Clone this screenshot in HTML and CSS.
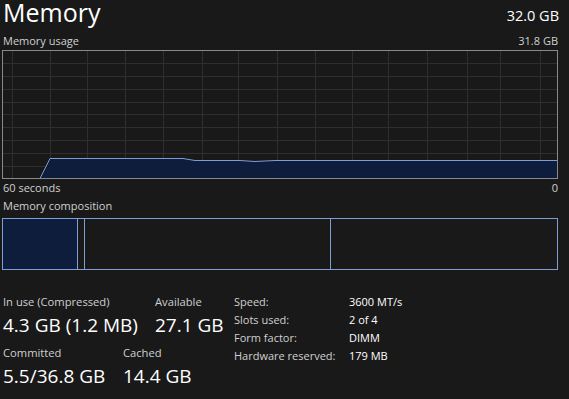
FILE: index.html
```html
<!DOCTYPE html>
<html>
<head>
<meta charset="utf-8">
<link rel="stylesheet" href="styles.css">
</head>
<body>
<div class="page">
  <div class="head">
    <div class="title">Memory</div>
    <div class="total">32.0 GB</div>
  </div>
  <div class="sub">
    <span>Memory usage</span>
    <span>31.8 GB</span>
  </div>
  <svg class="graph" width="556" height="129" viewBox="0 0 556 129">
    <g stroke="#2f2f2f" stroke-width="1">
      <line x1="10.5" y1="0" x2="10.5" y2="129"/>
      <line x1="48.5" y1="0" x2="48.5" y2="129"/>
      <line x1="85.5" y1="0" x2="85.5" y2="129"/>
      <line x1="123.5" y1="0" x2="123.5" y2="129"/>
      <line x1="161.5" y1="0" x2="161.5" y2="129"/>
      <line x1="200.5" y1="0" x2="200.5" y2="129"/>
      <line x1="236.5" y1="0" x2="236.5" y2="129"/>
      <line x1="275.5" y1="0" x2="275.5" y2="129"/>
      <line x1="313.5" y1="0" x2="313.5" y2="129"/>
      <line x1="350.5" y1="0" x2="350.5" y2="129"/>
      <line x1="386.5" y1="0" x2="386.5" y2="129"/>
      <line x1="425.5" y1="0" x2="425.5" y2="129"/>
      <line x1="465.5" y1="0" x2="465.5" y2="129"/>
      <line x1="498.5" y1="0" x2="498.5" y2="129"/>
      <line x1="538.5" y1="0" x2="538.5" y2="129"/>
      <line x1="0" y1="13.5" x2="556" y2="13.5"/>
      <line x1="0" y1="26.5" x2="556" y2="26.5"/>
      <line x1="0" y1="39.5" x2="556" y2="39.5"/>
      <line x1="0" y1="52.5" x2="556" y2="52.5"/>
      <line x1="0" y1="64.5" x2="556" y2="64.5"/>
      <line x1="0" y1="77.5" x2="556" y2="77.5"/>
      <line x1="0" y1="90.5" x2="556" y2="90.5"/>
      <line x1="0" y1="103.5" x2="556" y2="103.5"/>
      <line x1="0" y1="116.5" x2="556" y2="116.5"/>
    </g>
    <path d="M38 128.5 L48 108.5 L181 108.5 L193 110.5 L238 110.5 L253 111.5 L273 110.5 L556 110.5 L556 128.5 Z" fill="#0f1d3d"/>
    <path d="M38 128.5 L48 108.5 L181 108.5 L193 110.5 L238 110.5 L253 111.5 L273 110.5 L555 110.5" fill="none" stroke="#7e9bd4" stroke-width="1"/>
    <rect x="0.5" y="0.5" width="555" height="128" fill="none" stroke="#8a8a8a" stroke-width="1"/>
  </svg>
  <div class="axis">
    <span>60 seconds</span>
    <span>0</span>
  </div>
  <div class="label comp-label">Memory composition</div>
  <div class="comp">
    <div class="seg inuse"></div>
    <div class="seg modified"></div>
    <div class="seg standby"></div>
    <div class="seg free"></div>
  </div>
  <div class="stats">
    <div class="left">
      <div class="row">
        <div class="stat s-inuse">
          <div class="label">In use (Compressed)</div>
          <div class="value">4.3 GB (1.2 MB)</div>
        </div>
        <div class="stat">
          <div class="label">Available</div>
          <div class="value">27.1 GB</div>
        </div>
      </div>
      <div class="row">
        <div class="stat s-commit">
          <div class="label">Committed</div>
          <div class="value">5.5/36.8 GB</div>
        </div>
        <div class="stat">
          <div class="label">Cached</div>
          <div class="value">14.4 GB</div>
        </div>
      </div>
    </div>
    <div class="info">
      <div class="k">Speed:</div><div class="v">3600 MT/s</div>
      <div class="k">Slots used:</div><div class="v">2 of 4</div>
      <div class="k">Form factor:</div><div class="v">DIMM</div>
      <div class="k">Hardware reserved:</div><div class="v">179 MB</div>
    </div>
  </div>
</div>
</body>
</html>
```

FILE: styles.css
```css
html, body {
  margin: 0;
  padding: 0;
  background: #191919;
}
body {
  font-family: "Open Sans", "Noto Sans", sans-serif;
  color: #ffffff;
  width: 569px;
  height: 399px;
  overflow: hidden;
}
.page {
  padding: 0 11px 0 2px;
}
.head {
  display: flex;
  justify-content: space-between;
  align-items: flex-start;
  height: 32px;
}
.title {
  font-size: 25px;
  line-height: 25px;
  padding-left: 1px;
}
.total {
  font-size: 14.5px;
  line-height: 20px;
  margin-top: 6px;
  margin-right: -1px;
}
.sub, .axis {
  display: flex;
  justify-content: space-between;
  font-size: 11px;
  line-height: 18px;
  color: #d0d0d0;
  padding-left: 1px;
}
.graph {
  display: block;
}
.label {
  font-size: 11px;
  line-height: 18px;
  color: #d0d0d0;
}
.comp-label {
  padding-left: 1px;
}
.comp {
  display: flex;
  height: 50px;
  margin-top: 3px;
  border: 1px solid #7f9ed6;
}
.seg {
  height: 100%;
  box-sizing: border-box;
}
.inuse {
  width: 75px;
  background: #0f1d3d;
  border-right: 1px solid #7f9ed6;
}
.modified {
  width: 7px;
  border-right: 1px solid #7f9ed6;
}
.standby {
  width: 246px;
  border-right: 1px solid #7f9ed6;
}
.free {
  flex: 1;
}
.stats {
  display: flex;
  margin-top: 24px;
  padding-left: 1px;
}
.left {
  width: 231px;
}
.row {
  display: flex;
}
.row + .row {
  margin-top: 5px;
}
.stat .label {
  font-size: 11.2px;
  line-height: 16px;
}
.value {
  font-size: 19px;
  line-height: 30px;
}
.s-inuse {
  width: 152px;
}
.s-commit {
  width: 120px;
}
.info {
  display: grid;
  grid-template-columns: 115px auto;
  grid-auto-rows: 18px;
  font-size: 11px;
  line-height: 18px;
  margin-top: -1px;
}
.info .k {
  color: #d0d0d0;
}
.info .v {
  color: #ffffff;
}
```
